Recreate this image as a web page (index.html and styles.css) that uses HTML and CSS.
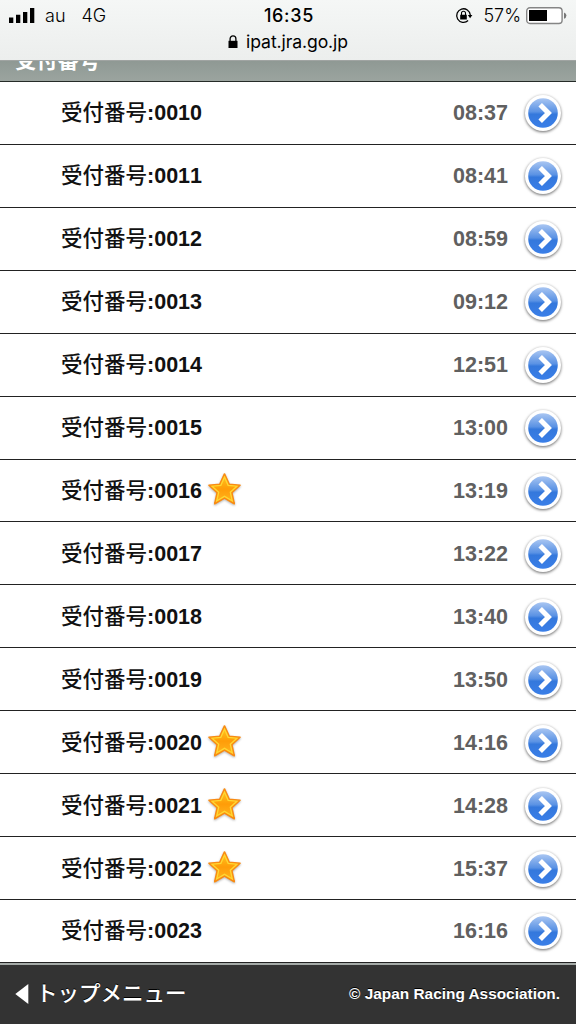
FILE: index.html
```html
<!DOCTYPE html>
<html lang="ja">
<head>
<meta charset="utf-8">
<title>ipat.jra.go.jp</title>
<link rel="stylesheet" href="styles.css">
</head>
<body>
<svg class="defs" aria-hidden="true">
  <defs>
    <linearGradient id="blue" x1="0" y1="0" x2="0" y2="1">
      <stop offset="0" stop-color="#a9c6f2"/><stop offset=".46" stop-color="#5a92e4"/>
      <stop offset=".54" stop-color="#3478dc"/><stop offset="1" stop-color="#3a7fe8"/>
    </linearGradient>
    <linearGradient id="gold" x1="0" y1="0" x2="0" y2="1">
      <stop offset="0" stop-color="#ffc21c"/><stop offset=".5" stop-color="#ff9c08"/><stop offset="1" stop-color="#ffb31c"/>
    </linearGradient>
    <symbol id="go" viewBox="0 0 40 40">
      <circle cx="20" cy="20" r="18" fill="#fff"/>
      <circle cx="20" cy="20" r="14.8" fill="url(#blue)"/>
      <path d="M17.2 11.8l8.2 8.2-8.2 8.2" fill="none" stroke="#fff" stroke-width="5"/>
    </symbol>
    <symbol id="star" viewBox="0 0 36 36">
      <path d="M18 2l4.8 10.5 11.2 1.1-8.4 7.7 2.5 11.4L18 26.8 7.9 32.7l2.5-11.4L2 13.6l11.2-1.1z" fill="#f98b12" stroke="#f98b12" stroke-width="1.6" stroke-linejoin="round"/>
      <path d="M18 5.2l3.8 8.5 9 .9-6.8 6.2 2 9L18 25l-8 4.8 2-9-6.8-6.2 9-.9z" fill="url(#gold)" stroke="#ffd832" stroke-width="1.4"/>
    </symbol>
  </defs>
</svg>
<header class="browser">
  <div class="status">
    <div class="carrier">
      <svg class="signal" viewBox="0 0 26 16"><path d="M0 9.5h4.3V15H0zM7 6.8h4.3V15H7zM14 4h4.3v11H14zM21 0h4.3v15H21z"/></svg>
      <span class="au">au</span><span>4G</span>
    </div>
    <div class="clock">16:35</div>
    <div class="power">
      <svg class="rotation" viewBox="0 0 18 18"><path d="M13.1 13.6A6.8 6.8 0 1 1 15.3 8" fill="none" stroke="#000" stroke-width="1.3"/><path d="M12.8 8h4.6l-2.3 3.3zM5.2 7.8h6.6v4.7H5.2z"/><path d="M6.5 8V6.3a2 2 0 0 1 4 0V8" fill="none" stroke="#000" stroke-width="1.1"/></svg>
      <span class="percent">57%</span>
      <svg class="battery" viewBox="0 0 42 18"><rect x=".7" y=".7" width="35.4" height="15.8" rx="3.2" fill="#fff" stroke="#858585" stroke-width="1.4"/><path d="M3 3h18v11H3z"/><path d="M38 5.4q2.4.8 2.4 3.2T38 11.8z" fill="#777"/></svg>
    </div>
  </div>
  <div class="address">
    <svg class="lock" viewBox="0 0 10 14"><path d="M.5 5.8h9V13h-9z"/><path d="M2.1 6V3.8a2.9 2.9 0 0 1 5.8 0V6" fill="none" stroke="#000" stroke-width="1.3"/></svg>
    <span>ipat.jra.go.jp</span>
  </div>
</header>
<div class="heading"><span>受付番号</span></div>
<main class="list" id="list"></main>
<footer class="footer">
  <a class="top"><svg class="back" viewBox="0 0 14 20"><path d="M13.3 0v20L.3 10z" fill="#fff"/></svg><span>トップメニュー</span></a>
  <span class="copyright">© Japan Racing Association.</span>
</footer>
<script src="list.js"></script>
</body>
</html>
```
FILE: styles.css
```css
* { box-sizing: border-box; }
body {
  margin: 0;
  width: 576px;
  height: 1024px;
  overflow: hidden;
  display: flex;
  flex-direction: column;
  background: #fff;
  color: #111;
  font-family: "Liberation Sans", "Noto Sans CJK JP", sans-serif;
}
svg { display: block; flex: none; }
.defs { position: absolute; width: 0; height: 0; }
.browser {
  flex: none;
  height: 61px;
  background: linear-gradient(#f5f7f6, #eceeed);
  border-bottom: 1px solid #a0a4a2;
  color: #000;
  font-family: Inter, "Liberation Sans", sans-serif;
}
.status {
  display: grid;
  grid-template-columns: 1fr auto 1fr;
  height: 32px;
  font-size: 18px;
  line-height: 32px;
}
.carrier { display: flex; align-items: center; padding-left: 9px; font-weight: 300; }
.signal { width: 26px; height: 16px; }
.au { margin: 0 16px 0 10px; }
.clock { font-weight: 500; letter-spacing: .7px; padding-left: 2px; }
.power { display: flex; align-items: center; justify-content: flex-end; padding-right: 8px; font-weight: 300; }
.rotation { width: 18px; height: 18px; margin-right: 10px; }
.percent { margin-right: 5px; }
.battery { width: 42px; height: 18px; }
.address {
  display: flex;
  justify-content: center;
  align-items: center;
  height: 20px;
  font-size: 17.6px;
  line-height: 20px;
  letter-spacing: -.1px;
}
.lock { width: 10px; height: 14px; margin: 0 8px 1px 0; }
.heading {
  flex: none;
  height: 21px;
  overflow: hidden;
  background: linear-gradient(#8f9994, #9ba49f);
  border-bottom: 1px solid #252b28;
  color: #fff;
  font-size: 21.3px;
  font-weight: 700;
  line-height: 30px;
  padding-left: 15px;
}
.heading span { display: block; margin-top: -15px; }
.list { flex: none; height: 881px; display: flex; flex-direction: column; }
.row {
  flex: 1;
  min-height: 0;
  display: flex;
  align-items: center;
  padding: 1px 13px 0 61px;
  border-bottom: 1px solid #222;
  font-size: 21.5px;
  font-weight: 700;
  line-height: 32px;
}
.label { font-weight: 500; }
.number { color: #111; font-kerning: none; }
.time { margin-left: auto; color: #606060; }
.go {
  width: 40px;
  height: 40px;
  margin-left: 15px;
  filter: drop-shadow(0 1px 1.5px rgba(0, 0, 0, .6));
}
.star { width: 35px; height: 35px; margin: -3px 0 0 5px; filter: drop-shadow(0 1px 1px rgba(0, 0, 0, .3)); }
.footer {
  flex: 1;
  display: flex;
  align-items: center;
  justify-content: space-between;
  padding: 0 16px 2px 15px;
  border-top: 2px solid #a4aaa7;
  background: #333;
  color: #fff;
  text-shadow: 0 -1px 0 #000;
}
.top { display: flex; align-items: center; font-size: 21.5px; font-weight: 500; line-height: 30px; }
.back { width: 14px; height: 20px; margin-right: 7px; }
.copyright { font-size: 15.4px; font-weight: 700; }
```
FILE: list.js
```js
const entries = [
  ["0010", "08:37"], ["0011", "08:41"], ["0012", "08:59"], ["0013", "09:12"],
  ["0014", "12:51"], ["0015", "13:00"], ["0016", "13:19", true], ["0017", "13:22"],
  ["0018", "13:40"], ["0019", "13:50"], ["0020", "14:16", true], ["0021", "14:28", true],
  ["0022", "15:37", true], ["0023", "16:16"]
];
document.getElementById("list").innerHTML = entries.map(([number, time, starred]) =>
  `<div class="row"><span class="label">受付番号</span><span class="number">:${number}</span>${
    starred ? '<svg class="star"><use href="#star"/></svg>' : ""
  }<span class="time">${time}</span><svg class="go"><use href="#go"/></svg></div>`
).join("");
```
